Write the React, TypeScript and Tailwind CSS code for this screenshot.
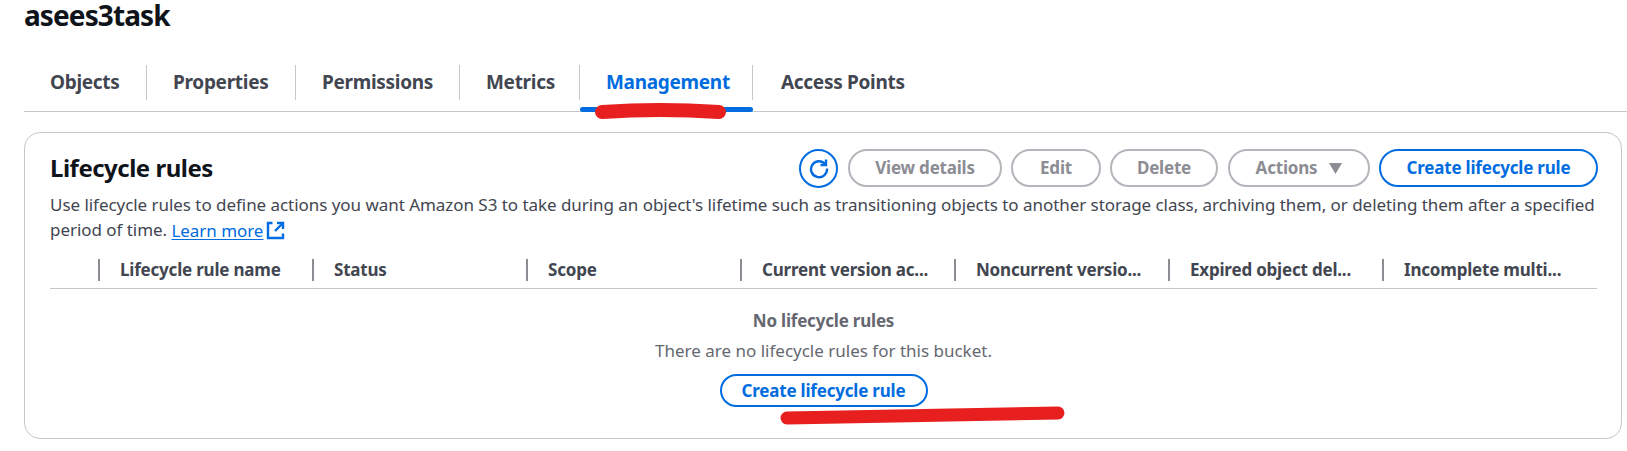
import React from 'react';

const font = "font-['Noto_Sans','Open_Sans',sans-serif]";

const tabs = [
  { label: 'Objects', width: 'w-[123px]' },
  { label: 'Properties', width: 'w-[149px]' },
  { label: 'Permissions', width: 'w-[164px]' },
  { label: 'Metrics', width: 'w-[120px]' },
  { label: 'Management', width: 'w-[173px]', active: true },
  { label: 'Access Points', width: 'w-[200px]', last: true },
];

const columns = [
  'Lifecycle rule name',
  'Status',
  'Scope',
  'Current version ac...',
  'Noncurrent versio...',
  'Expired object del...',
  'Incomplete multi...',
];

const RefreshIcon = () => (
  <svg width="22" height="22" viewBox="0 0 22 22" fill="none" stroke="#006ce0" strokeWidth="2.4">
    <path d="M17.500 7.500A8 8 0 1 0 19 11.500" />
    <path d="M18 2.500v5.500h-5.500" />
  </svg>
);

const ExternalIcon = () => (
  <svg width="19" height="19" viewBox="0 0 19 19" fill="none" stroke="#006ce0" strokeWidth="2.4" className="ml-[3px]">
    <path d="M6.500 2H2v15h15v-4.500" />
    <path d="M11 2h6v6" />
    <path d="M16.500 2.500 9 10" />
  </svg>
);

const App = () => {
  return (
    <div className={`relative w-full h-[451px] overflow-hidden bg-white ${font}`}>
      <h1 className="pl-6 h-[34px] text-[28px] leading-[31px] font-bold text-[#0f141a] tracking-[-0.9px]">asees3task</h1>

      {/* Tabs */}
      <div className="ml-6 mt-[31px] h-[47px] flex items-start border-b border-[#c6c6cd]">
        {tabs.map((tab) => (
          <div key={tab.label} className={`relative h-[47px] shrink-0 ${tab.width}`}>
            <div
              className={`h-[35px] pl-[26px] flex items-center text-[19px] font-bold tracking-[-0.3px] ${
                tab.active ? 'text-[#006ce0]' : 'text-[#424650]'
              } ${tab.last ? 'pl-[28px]' : 'border-r border-[#c6c6cd]'}`}
            >
              {tab.label}
            </div>
            {tab.active && <div className="absolute left-0 right-0 bottom-0 h-[5px] rounded-full bg-[#006ce0]" />}
          </div>
        ))}
      </div>

      {/* Lifecycle rules card */}
      <div className="ml-6 mt-[20px] w-[1598px] h-[307px] rounded-[16px] border border-[#c6c6cd] pl-[25px] pr-[23px] pt-[16px]">
        <div className="flex items-center justify-between h-[38px]">
          <h2 className="text-[24px] font-bold text-[#0f141a] tracking-[-0.5px]">Lifecycle rules</h2>
          <div className="flex items-center gap-[9px]">
            <div className="w-[39px] h-[39px] mr-[1px] rounded-full border-2 border-[#006ce0] flex items-center justify-center">
              <RefreshIcon />
            </div>
            {[
              { label: 'View details', w: 'w-[154px]' },
              { label: 'Edit', w: 'w-[90px]' },
              { label: 'Delete', w: 'w-[108px]' },
            ].map((b) => (
              <div key={b.label} className={`h-[38px] ${b.w} rounded-full border-2 border-[#b4b4bb] flex items-center justify-center text-[17px] font-bold text-[#8c8c94] tracking-[-0.2px]`}>
                {b.label}
              </div>
            ))}
            <div className="h-[38px] w-[142px] ml-[1px] rounded-full border-2 border-[#b4b4bb] flex items-center justify-center gap-[12px] text-[17px] font-bold text-[#8c8c94] tracking-[-0.2px]">
              Actions
              <svg width="13" height="11" viewBox="0 0 13 11"><path d="M0 0h13L6.500 11z" fill="#8c8c94" /></svg>
            </div>
            <div className="h-[38px] w-[219px] rounded-full border-2 border-[#006ce0] flex items-center justify-center text-[17px] font-bold text-[#006ce0] tracking-[-0.2px]">
              Create lifecycle rule
            </div>
          </div>
        </div>

        <p className="mt-[6px] w-[1555px] text-[17px] leading-[24.5px] text-[#424650] tracking-[-0.045px]">
          Use lifecycle rules to define actions you want Amazon S3 to take during an object's lifetime such as transitioning objects to another storage class, archiving them, or deleting them after a specified period of time.{' '}
          <span className="inline-flex items-center align-middle text-[#006ce0]">
            <span className="underline underline-offset-2">Learn more</span>
            <ExternalIcon />
          </span>
        </p>

        {/* Table header */}
        <div className="mt-[16px] w-[1547px] h-[30px] pl-[48px] flex items-start border-b border-[#c6c6cd]">
          {columns.map((c) => (
            <div key={c} className="w-[214px] h-[22px] shrink-0 border-l-2 border-[#8c8c94] pl-[20px] flex items-center text-[17px] font-bold text-[#424650] tracking-[-0.2px] whitespace-nowrap">
              {c}
            </div>
          ))}
        </div>

        {/* Empty state */}
        <div className="w-[1547px] flex flex-col items-center pt-[19px]">
          <div className="h-[26px] flex items-center text-[17px] font-bold text-[#656871] tracking-[-0.2px]">No lifecycle rules</div>
          <div className="mt-[4px] h-[26px] flex items-center text-[17px] text-[#656871]">There are no lifecycle rules for this bucket.</div>
          <div className="mt-[10px] h-[33px] w-[208px] rounded-full border-2 border-[#006ce0] flex items-center justify-center text-[17px] font-bold text-[#006ce0] tracking-[-0.2px]">
            Create lifecycle rule
          </div>
        </div>
      </div>

      {/* Red marker annotations */}
      <svg className="absolute left-0 top-0 pointer-events-none" width="1627" height="451" fill="none" stroke="#e71f1f" strokeLinecap="round">
        <path d="M602 112Q660 108 719 112" strokeWidth="14" />
        <path d="M787 418Q920 415 1058 413" strokeWidth="13" />
      </svg>
    </div>
  );
};

export default App;
